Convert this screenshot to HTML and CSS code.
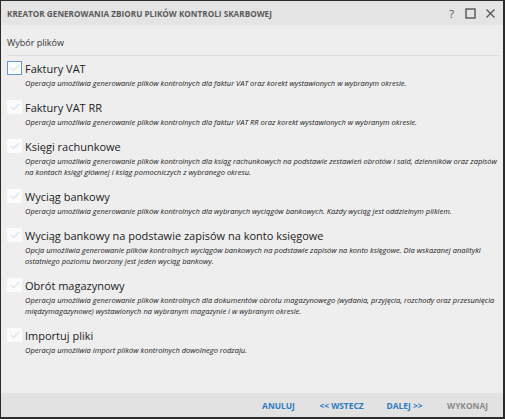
FILE: index.html
```html
<!DOCTYPE html>
<html lang="pl">
<head>
<meta charset="utf-8">
<link rel="stylesheet" href="styles.css">
</head>
<body>
<div class="window">
  <div class="titlebar">
    <div class="title">KREATOR GENEROWANIA ZBIORU PLIKÓW KONTROLI SKARBOWEJ</div>
    <div class="controls">
      <span class="help">?</span>
      <svg class="ico" width="11" height="11" viewBox="0 0 11 11"><rect x="1" y="1" width="9" height="9" fill="none" stroke="#555" stroke-width="1.4"/></svg>
      <svg class="ico" width="11" height="11" viewBox="0 0 11 11"><path d="M1.5 1.5 L9.5 9.5 M9.5 1.5 L1.5 9.5" stroke="#555" stroke-width="1.3" fill="none"/></svg>
    </div>
  </div>
  <div class="content">
    <div class="section">Wybór plików</div>
    <div class="list">
      <div class="item">
        <div class="row"><span class="cb focus"><svg width="12" height="10" viewBox="0 0 12 10"><path d="M2 5 L4.5 7.5 L10 2" stroke="#d6e6f3" stroke-width="1.3" fill="none"/></svg></span><span class="label">Faktury VAT</span></div>
        <div class="desc">Operacja umożliwia generowanie plików kontrolnych dla faktur VAT oraz korekt wystawionych w wybranym okresie.</div>
      </div>
      <div class="item">
        <div class="row"><span class="cb"><svg width="12" height="10" viewBox="0 0 12 10"><path d="M2 5 L4.5 7.5 L10 2" stroke="#d6e6f3" stroke-width="1.3" fill="none"/></svg></span><span class="label">Faktury VAT RR</span></div>
        <div class="desc">Operacja umożliwia generowanie plików kontrolnych dla faktur VAT RR oraz korekt wystawionych w wybranym okresie.</div>
      </div>
      <div class="item">
        <div class="row"><span class="cb"><svg width="12" height="10" viewBox="0 0 12 10"><path d="M2 5 L4.5 7.5 L10 2" stroke="#d6e6f3" stroke-width="1.3" fill="none"/></svg></span><span class="label">Księgi rachunkowe</span></div>
        <div class="desc">Operacja umożliwia generowanie plików kontrolnych dla ksiąg rachunkowych na podstawie zestawień obrotów i sald, dzienników oraz zapisów na kontach księgi głównej i ksiąg pomocniczych z wybranego okresu.</div>
      </div>
      <div class="item">
        <div class="row"><span class="cb"><svg width="12" height="10" viewBox="0 0 12 10"><path d="M2 5 L4.5 7.5 L10 2" stroke="#d6e6f3" stroke-width="1.3" fill="none"/></svg></span><span class="label">Wyciąg bankowy</span></div>
        <div class="desc">Operacja umożliwia generowanie plików kontrolnych dla wybranych wyciągów bankowych. Każdy wyciąg jest oddzielnym plikiem.</div>
      </div>
      <div class="item">
        <div class="row"><span class="cb"><svg width="12" height="10" viewBox="0 0 12 10"><path d="M2 5 L4.5 7.5 L10 2" stroke="#d6e6f3" stroke-width="1.3" fill="none"/></svg></span><span class="label">Wyciąg bankowy na podstawie zapisów na konto księgowe</span></div>
        <div class="desc">Opcja umożliwia generowanie plików kontrolnych wyciągów bankowych na podstawie zapisów na konto księgowe. Dla wskazanej analityki ostatniego poziomu tworzony jest jeden wyciąg bankowy.</div>
      </div>
      <div class="item">
        <div class="row"><span class="cb"><svg width="12" height="10" viewBox="0 0 12 10"><path d="M2 5 L4.5 7.5 L10 2" stroke="#d6e6f3" stroke-width="1.3" fill="none"/></svg></span><span class="label">Obrót magazynowy</span></div>
        <div class="desc">Operacja umożliwia generowanie plików kontrolnych dla dokumentów obrotu magazynowego (wydania, przyjęcia, rozchody oraz przesunięcia międzymagazynowe) wystawionych na wybranym magazynie i w wybranym okresie.</div>
      </div>
      <div class="item">
        <div class="row"><span class="cb"><svg width="12" height="10" viewBox="0 0 12 10"><path d="M2 5 L4.5 7.5 L10 2" stroke="#d6e6f3" stroke-width="1.3" fill="none"/></svg></span><span class="label">Importuj pliki</span></div>
        <div class="desc">Operacja umożliwia import plików kontrolnych dowolnego rodzaju.</div>
      </div>
    </div>
  </div>
  <div class="footer">
    <span class="btn">ANULUJ</span>
    <span class="btn">&lt;&lt; WSTECZ</span>
    <span class="btn">DALEJ &gt;&gt;</span>
    <span class="btn disabled">WYKONAJ</span>
  </div>
</div>
</body>
</html>
```
FILE: styles.css
```css
* { box-sizing: border-box; }
html, body { margin: 0; padding: 0; }
body { font-family: "Open Sans", "Noto Sans", sans-serif; background: #2b2b2b; }
.window {
  width: 505px;
  height: 419px;
  border-style: solid;
  border-color: #2b2b2b;
  border-width: 1px 2px 2px 1px;
  background: #eeeeee;
  display: flex;
  flex-direction: column;
}
.titlebar {
  height: 24px;
  background: #e4e4e4;
  display: flex;
  align-items: center;
  justify-content: space-between;
  padding: 0 7px 0 6px;
  flex: none;
}
.title {
  font-size: 8.2px;
  font-weight: 700;
  color: #5a5a5a;
  padding-top: 1px;
}
.controls {
  display: flex;
  align-items: center;
  gap: 9px;
  padding-top: 1px;
}
.help {
  font-size: 11px;
  color: #555;
  width: 9px;
  text-align: center;
}
.ico { display: block; }
.content {
  flex: 1;
  padding: 12px 4px 0 6px;
}
.section {
  font-size: 9px;
  color: #333;
  line-height: 12px;
  padding-bottom: 6px;
  border-bottom: 1px solid #dcdcdc;
}
.list {
  display: flex;
  flex-direction: column;
  gap: 10px;
  padding-top: 4px;
}
.row {
  display: flex;
  align-items: center;
  gap: 3px;
  height: 16px;
}
.cb {
  width: 15px;
  height: 14px;
  background: #fbfbfb;
  display: flex;
  align-items: center;
  justify-content: center;
  flex: none;
}
.cb.focus {
  border: 1px solid #5d9bd0;
}
.label {
  font-size: 11px;
  color: #222;
}
.desc {
  font-size: 7.5px;
  font-style: italic;
  color: #222;
  line-height: 11px;
  padding-left: 18px;
  margin-top: 2px;
}
.footer {
  height: 24px;
  background: #e2e2e2;
  display: flex;
  align-items: center;
  justify-content: flex-end;
  padding-right: 4px;
  flex: none;
}
.btn {
  font-size: 8.4px;
  font-weight: 700;
  color: #2f7bbf;
  width: 63px;
  text-align: center;
}
.btn.disabled { color: #8a8a8a; }
```
